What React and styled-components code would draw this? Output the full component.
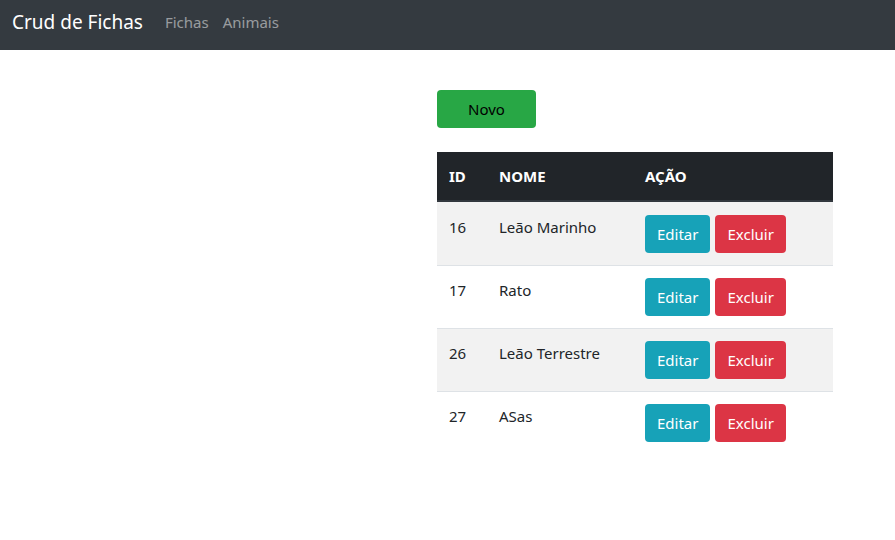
import React from "react";
import styled, { createGlobalStyle } from "styled-components";

const fichas = [
  { id: 16, nome: "Leão Marinho" },
  { id: 17, nome: "Rato" },
  { id: 26, nome: "Leão Terrestre" },
  { id: 27, nome: "ASas" },
];

const GlobalStyle = createGlobalStyle`
  body {
    margin: 0;
    font-family: "Noto Sans", "Open Sans", sans-serif;
    font-size: 15px;
    line-height: 24px;
    color: #212529;
    background: #fff;
  }
`;

const App = () => {
  return (
    <>
      <GlobalStyle />
      <Navbar>
        <Brand href="#">Crud de Fichas</Brand>
        <NavLinks>
          <NavLink href="#">Fichas</NavLink>
          <NavLink href="#">Animais</NavLink>
        </NavLinks>
      </Navbar>
      <Content>
        <Main>
          <Button color="#28a745" text="#000" wide>
            Novo
          </Button>
          <Table>
            <thead>
              <tr>
                <Th>ID</Th>
                <Th>NOME</Th>
                <Th>AÇÃO</Th>
              </tr>
            </thead>
            <tbody>
              {fichas.map((f, i) => (
                <Row key={f.id} striped={i % 2 === 0}>
                  <Td>{f.id}</Td>
                  <Td>{f.nome}</Td>
                  <Td>
                    <Actions>
                      <Button color="#17a2b8">Editar</Button>
                      <Button color="#dc3545">Excluir</Button>
                    </Actions>
                  </Td>
                </Row>
              ))}
            </tbody>
          </Table>
        </Main>
      </Content>
    </>
  );
};

const Navbar = styled.nav`
  display: flex;
  align-items: center;
  box-sizing: border-box;
  height: 50px;
  padding: 0 12px 6px;
  background: #343a40;
`;

const Brand = styled.a`
  color: #fff;
  font-size: 19px;
  text-decoration: none;
  margin-right: 14px;
`;

const NavLinks = styled.div`
  display: flex;
  gap: 14px;
  padding-left: 8px;
`;

const NavLink = styled.a`
  color: rgba(255, 255, 255, 0.5);
  text-decoration: none;
`;

const Content = styled.div`
  display: grid;
  grid-template-columns: 437px 396px;
`;

const Main = styled.main`
  grid-column: 2;
  padding-top: 40px;
`;

const Button = styled.button`
  display: inline-block;
  height: 38px;
  width: ${(p) => (p.wide ? "99px" : "auto")};
  padding: 0 12px;
  border: none;
  border-radius: 4px;
  background: ${(p) => p.color};
  color: ${(p) => p.text || "#fff"};
  font-family: inherit;
  font-size: 15px;
  cursor: pointer;
`;

const Table = styled.table`
  width: 100%;
  margin-top: 24px;
  border-collapse: collapse;
`;

const Th = styled.th`
  text-align: left;
  padding: 12px;
  background: #212529;
  color: #fff;
  font-weight: 700;
  border-bottom: 2px solid #32383e;
  &:first-child {
    width: 26px;
  }
  &:nth-child(2) {
    width: 122px;
  }
`;

const Td = styled.td`
  padding: 12px;
  vertical-align: top;
`;

const Row = styled.tr`
  background: ${(p) => (p.striped ? "#f2f2f2" : "#fff")};
  border-top: 1px solid #dee2e6;

  &:first-child ${Td} {
    padding-top: 13px;
  }
`;

const Actions = styled.div`
  display: flex;
  gap: 5px;
`;

export default App;
